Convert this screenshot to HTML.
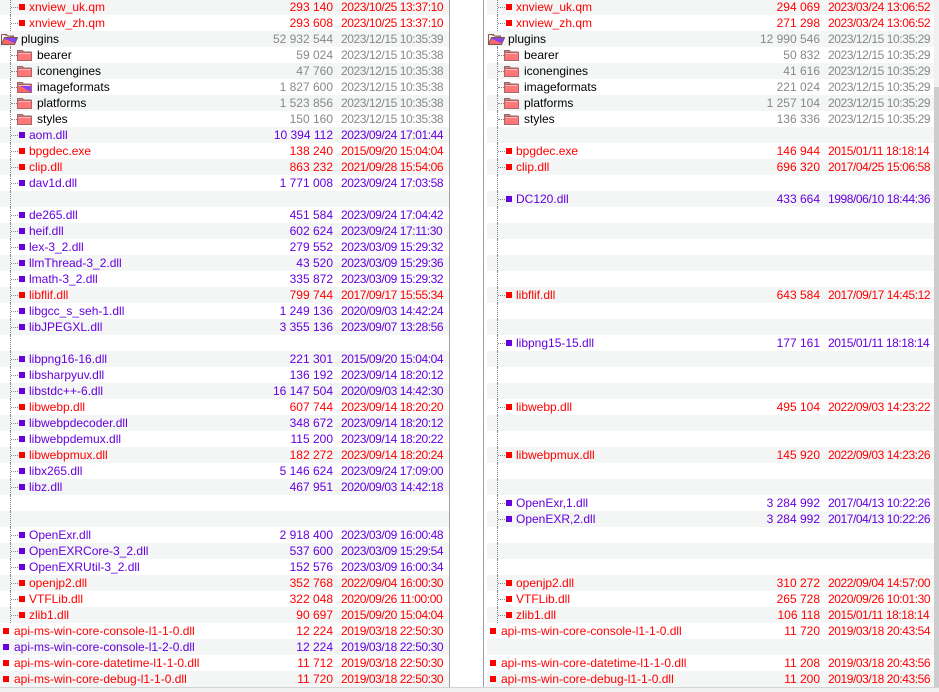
<!DOCTYPE html>
<html><head><meta charset="utf-8"><style>
html,body{margin:0;padding:0;background:#fff;width:939px;height:692px;overflow:hidden;position:relative;font-family:"Liberation Sans",sans-serif;font-size:12px}
.r{position:absolute;height:16px;line-height:16px;white-space:nowrap}
.s{background:#f4f6f6}
.t{position:absolute;top:0}
.sz{position:absolute;text-align:right;width:120px}
.dt{position:absolute;letter-spacing:-0.42px}
.sq{position:absolute;width:6px;height:6px;top:5px}
.vl{position:absolute;border-left:1px dotted #888;width:0}
.hl{position:absolute;border-top:1px dotted #888;height:0;top:8px}
.fold{position:absolute;top:2px;width:15px;height:12px}
</style></head><body>
<div id="root"></div>
<div style="position:absolute;left:449px;top:0;width:1px;height:687px;background:#a0a0a0"></div>
<div style="position:absolute;left:483px;top:0;width:1px;height:687px;background:#a0a0a0"></div>
<div style="position:absolute;left:934px;top:0;width:5px;height:687px;background:#f0f0f0"></div>
<div style="position:absolute;left:934px;top:87px;width:5px;height:600px;background:#cdcdcd"></div>
<div style="position:absolute;left:0;top:687px;width:939px;height:1px;background:#d4d4d4"></div>
<div style="position:absolute;left:0;top:688px;width:939px;height:4px;background:#f0f0f0"></div>
<script>
var L=[
["f1","xnview_uk.qm","293 140","2023/10/25 13:37:10","red"],
["f1","xnview_zh.qm","293 608","2023/10/25 13:37:10","red"],
["plug","plugins","52 932 544","2023/12/15 10:35:39","gry"],
["d","bearer","59 024","2023/12/15 10:35:38","gry"],
["d","iconengines","47 760","2023/12/15 10:35:38","gry"],
["dp","imageformats","1 827 600","2023/12/15 10:35:38","gry"],
["d","platforms","1 523 856","2023/12/15 10:35:38","gry"],
["d","styles","150 160","2023/12/15 10:35:38","gry"],
["f1","aom.dll","10 394 112","2023/09/24 17:01:44","pur"],
["f1","bpgdec.exe","138 240","2015/09/20 15:04:04","red"],
["f1","clip.dll","863 232","2021/09/28 15:54:06","red"],
["f1","dav1d.dll","1 771 008","2023/09/24 17:03:58","pur"],
null,
["f1","de265.dll","451 584","2023/09/24 17:04:42","pur"],
["f1","heif.dll","602 624","2023/09/24 17:11:30","pur"],
["f1","lex-3_2.dll","279 552","2023/03/09 15:29:32","pur"],
["f1","llmThread-3_2.dll","43 520","2023/03/09 15:29:36","pur"],
["f1","lmath-3_2.dll","335 872","2023/03/09 15:29:32","pur"],
["f1","libflif.dll","799 744","2017/09/17 15:55:34","red"],
["f1","libgcc_s_seh-1.dll","1 249 136","2020/09/03 14:42:24","pur"],
["f1","libJPEGXL.dll","3 355 136","2023/09/07 13:28:56","pur"],
null,
["f1","libpng16-16.dll","221 301","2015/09/20 15:04:04","pur"],
["f1","libsharpyuv.dll","136 192","2023/09/14 18:20:12","pur"],
["f1","libstdc++-6.dll","16 147 504","2020/09/03 14:42:30","pur"],
["f1","libwebp.dll","607 744","2023/09/14 18:20:20","red"],
["f1","libwebpdecoder.dll","348 672","2023/09/14 18:20:12","pur"],
["f1","libwebpdemux.dll","115 200","2023/09/14 18:20:22","pur"],
["f1","libwebpmux.dll","182 272","2023/09/14 18:20:24","red"],
["f1","libx265.dll","5 146 624","2023/09/24 17:09:00","pur"],
["f1","libz.dll","467 951","2020/09/03 14:42:18","pur"],
null,null,
["f1","OpenExr.dll","2 918 400","2023/03/09 16:00:48","pur"],
["f1","OpenEXRCore-3_2.dll","537 600","2023/03/09 15:29:54","pur"],
["f1","OpenEXRUtil-3_2.dll","152 576","2023/03/09 16:00:34","pur"],
["f1","openjp2.dll","352 768","2022/09/04 16:00:30","red"],
["f1","VTFLib.dll","322 048","2020/09/26 11:00:00","red"],
["f1","zlib1.dll","90 697","2015/09/20 15:04:04","red"],
["f0","api-ms-win-core-console-l1-1-0.dll","12 224","2019/03/18 22:50:30","red"],
["f0","api-ms-win-core-console-l1-2-0.dll","12 224","2019/03/18 22:50:30","pur"],
["f0","api-ms-win-core-datetime-l1-1-0.dll","11 712","2019/03/18 22:50:30","red"],
["f0","api-ms-win-core-debug-l1-1-0.dll","11 720","2019/03/18 22:50:30","red"]];
var R=[
["f1","xnview_uk.qm","294 069","2023/03/24 13:06:52","red"],
["f1","xnview_zh.qm","271 298","2023/03/24 13:06:52","red"],
["plug","plugins","12 990 546","2023/12/15 10:35:29","gry"],
["d","bearer","50 832","2023/12/15 10:35:29","gry"],
["d","iconengines","41 616","2023/12/15 10:35:29","gry"],
["d","imageformats","221 024","2023/12/15 10:35:29","gry"],
["d","platforms","1 257 104","2023/12/15 10:35:29","gry"],
["d","styles","136 336","2023/12/15 10:35:29","gry"],
null,
["f1","bpgdec.exe","146 944","2015/01/11 18:18:14","red"],
["f1","clip.dll","696 320","2017/04/25 15:06:58","red"],
null,
["f1","DC120.dll","433 664","1998/06/10 18:44:36","pur"],
null,null,null,null,null,
["f1","libflif.dll","643 584","2017/09/17 14:45:12","red"],
null,null,
["f1","libpng15-15.dll","177 161","2015/01/11 18:18:14","pur"],
null,null,null,
["f1","libwebp.dll","495 104","2022/09/03 14:23:22","red"],
null,null,
["f1","libwebpmux.dll","145 920","2022/09/03 14:23:26","red"],
null,null,
["f1","OpenExr,1.dll","3 284 992","2017/04/13 10:22:26","pur"],
["f1","OpenEXR,2.dll","3 284 992","2017/04/13 10:22:26","pur"],
null,null,null,
["f1","openjp2.dll","310 272","2022/09/04 14:57:00","red"],
["f1","VTFLib.dll","265 728","2020/09/26 10:01:30","red"],
["f1","zlib1.dll","106 118","2015/01/11 18:18:14","red"],
["f0","api-ms-win-core-console-l1-1-0.dll","11 720","2019/03/18 20:43:54","red"],
null,
["f0","api-ms-win-core-datetime-l1-1-0.dll","11 208","2019/03/18 20:43:56","red"],
["f0","api-ms-win-core-debug-l1-1-0.dll","11 200","2019/03/18 20:43:56","red"]];
var col={red:"#f00",pur:"#6600dd",gry:"#888"};
function folder(x,purple,open){
 if(open){return '<svg class="fold" style="left:'+x+'px;width:17px" viewBox="0 0 17 12"><defs><linearGradient id="pg2" x1="0" y1="1" x2="1" y2="0"><stop offset=".5" stop-color="#f66"/><stop offset=".5" stop-color="#8844ee"/></linearGradient></defs><path d="M.5 1.5h5l1 1.5h6v2" fill="#e88" stroke="#855"/><path d="M.5 11.5l3-7h13l-3 7z" fill="url(#pg2)" stroke="#755"/><path d="M.5 1.5v10" stroke="#855"/></svg>';}
 return '<svg class="fold" style="left:'+x+'px" viewBox="0 0 15 12"><defs><linearGradient id="pg" x1="0" y1="1" x2="1" y2="0"><stop offset=".5" stop-color="#f66"/><stop offset=".5" stop-color="#8844ee"/></linearGradient></defs><path d="M.5 1.5h5l1 1.5h7.5v8.5H.5z" fill="#c88" stroke="#966"/><path d="M.5 3.5h14v8H.5z" fill="'+(purple?'url(#pg)':'#f77')+'" stroke="#a66"/><path d="M1.5 4.5h12" stroke="#fbb"/></svg>';
}
var h='';
function pane(D,ox){
 for(var i=0;i<43;i++){
  var top=-1+16*i,d=D[i];
  h+='<div class="r'+(i%2==0?' s':'')+'" style="left:'+ox+'px;top:'+top+'px;width:'+(ox?450:449)+'px">';
  if(i<=38&&i!=2) h+='<div class="vl" style="left:10px;top:0;height:16px"></div>';
  if(i==2) h+='<div class="vl" style="left:10px;top:12px;height:4px"></div>';
  if(d){
   var c=col[d[4]],k=d[0];
   if(k=="f1"){h+='<div class="hl" style="left:11px;width:7px"></div><div class="sq" style="left:19px;background:'+c+'"></div><span class="t" style="left:29px;color:'+c+'">'+d[1]+'</span>';}
   else if(k=="f0"){h+='<div class="sq" style="left:3px;background:'+c+'"></div><span class="t" style="left:14px;color:'+c+'">'+d[1]+'</span>';}
   else if(k=="plug"){h+=folder(1,0,1)+'<span class="t" style="left:21px;color:#000">'+d[1]+'</span>';}
   else {h+='<div class="hl" style="left:11px;width:6px"></div>'+folder(17,k=="dp",0)+'<span class="t" style="left:37px;color:#000">'+d[1]+'</span>';}
   h+='<span class="sz" style="left:'+(333-120)+'px;color:'+c+'">'+d[2]+'</span><span class="dt" style="left:341px;color:'+c+'">'+d[3]+'</span>';
  }
  h+='</div>';
 }
}
pane(L,0);pane(R,487);
document.getElementById('root').innerHTML=h;
</script>
</body></html>
